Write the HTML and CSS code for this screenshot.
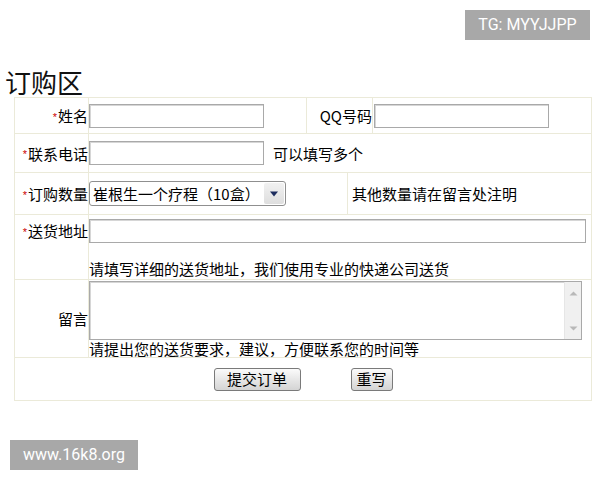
FILE: index.html
```html
<!DOCTYPE html>
<html lang="zh-CN">
<head>
<meta charset="utf-8">
<title>订购区</title>
<link rel="stylesheet" href="styles.css">
</head>
<body>
<div class="badge badge-top">TG: MYYJJPP</div>
<h1 class="title">订购区</h1>
<form class="order">
  <div class="row row1">
    <div class="cell label"><span class="req">*</span>姓名</div>
    <div class="cell field w217"><input class="txt" type="text"></div>
    <div class="cell label qq">QQ号码</div>
    <div class="cell field grow pl1"><input class="txt" type="text"></div>
  </div>
  <div class="row row2">
    <div class="cell label"><span class="req">*</span>联系电话</div>
    <div class="cell field grow"><input class="txt" type="text"><span class="hint">可以填写多个</span></div>
  </div>
  <div class="row row3">
    <div class="cell label"><span class="req">*</span>订购数量</div>
    <div class="cell field w258">
      <div class="select">
        <span class="select-text">崔根生一个疗程（10盒）</span>
        <span class="select-btn"><svg width="10" height="6" viewBox="0 0 10 6"><path d="M1 0.5h8L5 5.5z" fill="#1c2d5e"/></svg></span>
      </div>
    </div>
    <div class="cell grow note">其他数量请在留言处注明</div>
  </div>
  <div class="row row4">
    <div class="cell label top"><span class="req">*</span>送货地址</div>
    <div class="cell field grow col">
      <input class="txt addr" type="text">
      <span class="sub">请填写详细的送货地址，我们使用专业的快递公司送货</span>
    </div>
  </div>
  <div class="row row5">
    <div class="cell label">留言</div>
    <div class="cell field grow col">
      <div class="area">
        <textarea class="area-input"></textarea>
        <div class="scroll">
          <svg width="9" height="5" viewBox="0 0 9 5"><path d="M0.5 4.5h8L4.5 0.5z" fill="#b8b8b8"/></svg>
          <svg width="9" height="5" viewBox="0 0 9 5"><path d="M0.5 0.5h8L4.5 4.5z" fill="#b8b8b8"/></svg>
        </div>
      </div>
      <span class="sub sub2">请提出您的送货要求，建议，方便联系您的时间等</span>
    </div>
  </div>
  <div class="row row6">
    <div class="cell grow buttons">
      <button class="btn submit" type="button">提交订单</button>
      <button class="btn reset" type="button">重写</button>
    </div>
  </div>
</form>
<div class="badge badge-bottom">www.16k8.org</div>
</body>
</html>
```
FILE: styles.css
```css
html, body {
  margin: 0;
  padding: 0;
  background: #ffffff;
}
body {
  width: 600px;
  height: 480px;
  position: relative;
  overflow: hidden;
  font-family: "Noto Sans CJK SC", "Liberation Sans", sans-serif;
  font-size: 15px;
  color: #000;
}
.badge {
  position: absolute;
  background: #a8a8a8;
  color: #fff;
  font-family: Roboto, "Liberation Sans", sans-serif;
  font-size: 16px;
  height: 30px;
  line-height: 30px;
  text-align: center;
}
.badge-top {
  left: 465px;
  top: 10px;
  width: 125px;
}
.badge-bottom {
  left: 10px;
  top: 440px;
  width: 128px;
}
.title {
  margin: 66px 0 0 5px;
  font-size: 26px;
  font-weight: normal;
  line-height: 31px;
  height: 31px;
  color: #111;
}
.order {
  margin: 0 0 0 14px;
  width: 576px;
  border: 1px solid #ebead9;
  display: flex;
  flex-direction: column;
}
.row {
  display: flex;
  border-bottom: 1px solid #ebead9;
}
.row:last-child {
  border-bottom: none;
}
.row1 { height: 35px; }
.row2 { height: 38px; }
.row3 { height: 41px; }
.row4 { height: 64px; }
.row5 { height: 77px; }
.row6 { height: 42px; }
.cell {
  display: flex;
  align-items: center;
  border-right: 1px solid #ebead9;
  box-sizing: border-box;
}
.cell:last-child {
  border-right: none;
}
.label {
  width: 74px;
  flex: none;
  justify-content: flex-end;
  white-space: nowrap;
}
.label.qq {
  width: 66px;
}
.label.top {
  align-items: flex-start;
  padding-top: 4px;
  line-height: 24px;
}
.req {
  color: #cc0000;
  font-family: "Liberation Sans", sans-serif;
  font-size: 11px;
  margin-right: 1px;
  position: relative;
  top: 1px;
}
.w217 { width: 218px; flex: none; }
.w258 { width: 259px; flex: none; }
.grow { flex: 1; }
.pl1 { padding-left: 1px; }
.txt {
  width: 175px;
  height: 24px;
  box-sizing: border-box;
  margin: 0;
  border: 1px solid #a9a9a9;
  box-shadow: inset 1px 1px 0 #d6d6d6;
  background: #fff;
  font: inherit;
  padding: 0 3px;
}
.hint {
  margin-left: 9px;
  white-space: nowrap;
}
.select {
  position: relative;
  width: 197px;
  height: 25px;
  box-sizing: border-box;
  border: 1px solid #8f8f8f;
  border-radius: 3px;
  background: #fff;
  display: flex;
  align-items: center;
}
.select-text {
  padding-left: 3px;
  white-space: nowrap;
  font-size: 15px;
}
.select-btn {
  position: absolute;
  right: 1px;
  top: 1px;
  bottom: 1px;
  width: 20px;
  border-radius: 2px;
  background: linear-gradient(#f1f1f1, #dedede);
  display: flex;
  align-items: center;
  justify-content: center;
}
.note {
  padding-left: 4px;
  white-space: nowrap;
}
.col {
  flex-direction: column;
  align-items: flex-start;
  justify-content: space-between;
}
.row4 .col {
  padding-top: 4px;
}
.addr {
  width: 497px;
  flex: none;
}
.sub {
  line-height: 20px;
  white-space: nowrap;
}
.row5 .col {
  padding-top: 1px;
}
.area {
  width: 493px;
  height: 59px;
  box-sizing: border-box;
  border: 1px solid #a9a9a9;
  box-shadow: inset 1px 1px 0 #d6d6d6;
  display: flex;
  flex: none;
  background: #fff;
}
.area-input {
  flex: 1;
  border: none;
  outline: none;
  resize: none;
  margin: 0;
  background: transparent;
  font: inherit;
}
.scroll {
  width: 17px;
  background: #f0f0f0;
  border-left: 1px solid #e6e6e6;
  display: flex;
  flex-direction: column;
  align-items: center;
  justify-content: space-between;
  padding: 9px 0 8px;
  box-sizing: border-box;
}
.sub2 {
  line-height: 17px;
}
.buttons {
  justify-content: center;
  gap: 50px;
}
.btn {
  height: 23px;
  box-sizing: border-box;
  margin: 0;
  padding: 0;
  border: 1px solid #7a7a7a;
  border-radius: 3px;
  background: linear-gradient(#fbfbfb, #e3e3e3 60%, #d4d4d4);
  font-family: "Noto Sans CJK SC", sans-serif;
  font-size: 15px;
  line-height: 20px;
  color: #000;
}
.submit { width: 87px; }
.reset { width: 42px; }
```
